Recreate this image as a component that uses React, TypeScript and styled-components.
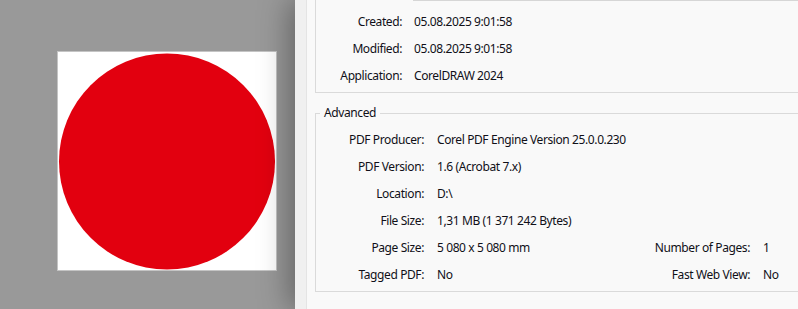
import React from 'react'
import styled, { createGlobalStyle } from 'styled-components'

const GlobalStyle = createGlobalStyle`
  html, body {
    margin: 0;
    padding: 0;
    width: 798px;
    height: 309px;
    overflow: hidden;
    background: #999999;
  }
  body {
    font-family: 'Noto Sans', 'Open Sans', Arial, sans-serif;
    font-size: 12px;
    letter-spacing: -0.4px;
    color: #101018;
  }
`

const Window = styled.div`
  display: flex;
  width: 798px;
  height: 309px;
  overflow: hidden;
`

const Preview = styled.div`
  flex: 0 0 295px;
  background: #999999;
  padding: 51px 0 0 57px;
  box-sizing: border-box;
`

const Page = styled.div`
  width: 220px;
  height: 220px;
  box-sizing: border-box;
  background: #ffffff;
  border: 1px solid #c4c4c4;
  display: flex;
  align-items: center;
  justify-content: center;
`

const Panel = styled.div`
  flex: 1;
  display: flex;
  position: relative;
  z-index: 1;
  box-shadow: -6px 0 28px rgba(0, 0, 0, 0.34);
`

const Strip = styled.div`
  flex: 0 0 11px;
  background: #f0f0f0;
  border-right: 1px solid #e4e4e4;
`

const Content = styled.div`
  flex: 1;
  background: #f9f9f9;
  padding-left: 8px;
  overflow: hidden;
`

const Group = styled.fieldset<{ open?: boolean }>`
  margin: 0 -30px 0 0;
  min-inline-size: 0;
  border: 1px solid #dadada;
  border-top: ${({ open }) => (open ? 'none' : '1px solid #dadada')};
  padding: ${({ open }) => (open ? '0 0 3px 0' : '5px 0 3px 4px')};
  & + & {
    margin-top: 12px;
  }
`

const Legend = styled.legend`
  padding: 0 4px;
  line-height: 16px;
  font-size: 12px;
`

const FieldStub = styled.div`
  margin-left: 97px;
  height: 0;
  border-left: 1px solid #d6d6d6;
  border-bottom: 1px solid #d6d6d6;
  margin-bottom: 7px;
`

const Rows = styled.div<{ cols: string; gap?: number }>`
  display: grid;
  grid-template-columns: ${({ cols }) => cols};
  grid-auto-rows: 27px;
  column-gap: ${({ gap }) => gap || 13}px;
  align-items: center;
`

const Label = styled.div`
  text-align: right;
  white-space: nowrap;
  line-height: 27px;
`

const Value = styled.div`
  white-space: nowrap;
  line-height: 27px;
`

export default function App() {
  return (
    <Window>
      <GlobalStyle />
      <Preview>
        <Page>
          <svg width="218" height="218" viewBox="0 0 218 218">
            <circle cx="109" cy="109.5" r="108" fill="#e2000f" />
          </svg>
        </Page>
      </Preview>
      <Panel>
        <Strip />
        <Content>
          <Group open>
            <FieldStub />
            <Rows cols="86px 1fr" gap={12}>
              <Label>Created:</Label>
              <Value>05.08.2025 9:01:58</Value>
              <Label>Modified:</Label>
              <Value>05.08.2025 9:01:58</Value>
              <Label>Application:</Label>
              <Value>CorelDRAW 2024</Value>
            </Rows>
          </Group>
          <Group>
            <Legend>Advanced</Legend>
            <Rows cols="104px 200px 100px 1fr">
              <Label>PDF Producer:</Label>
              <Value>Corel PDF Engine Version 25.0.0.230</Value>
              <span />
              <span />
              <Label>PDF Version:</Label>
              <Value>1.6 (Acrobat 7.x)</Value>
              <span />
              <span />
              <Label>Location:</Label>
              <Value>D:\</Value>
              <span />
              <span />
              <Label>File Size:</Label>
              <Value>1,31 MB (1 371 242 Bytes)</Value>
              <span />
              <span />
              <Label>Page Size:</Label>
              <Value>5 080 x 5 080 mm</Value>
              <Label>Number of Pages:</Label>
              <Value>1</Value>
              <Label>Tagged PDF:</Label>
              <Value>No</Value>
              <Label>Fast Web View:</Label>
              <Value>No</Value>
            </Rows>
          </Group>
        </Content>
      </Panel>
    </Window>
  )
}
